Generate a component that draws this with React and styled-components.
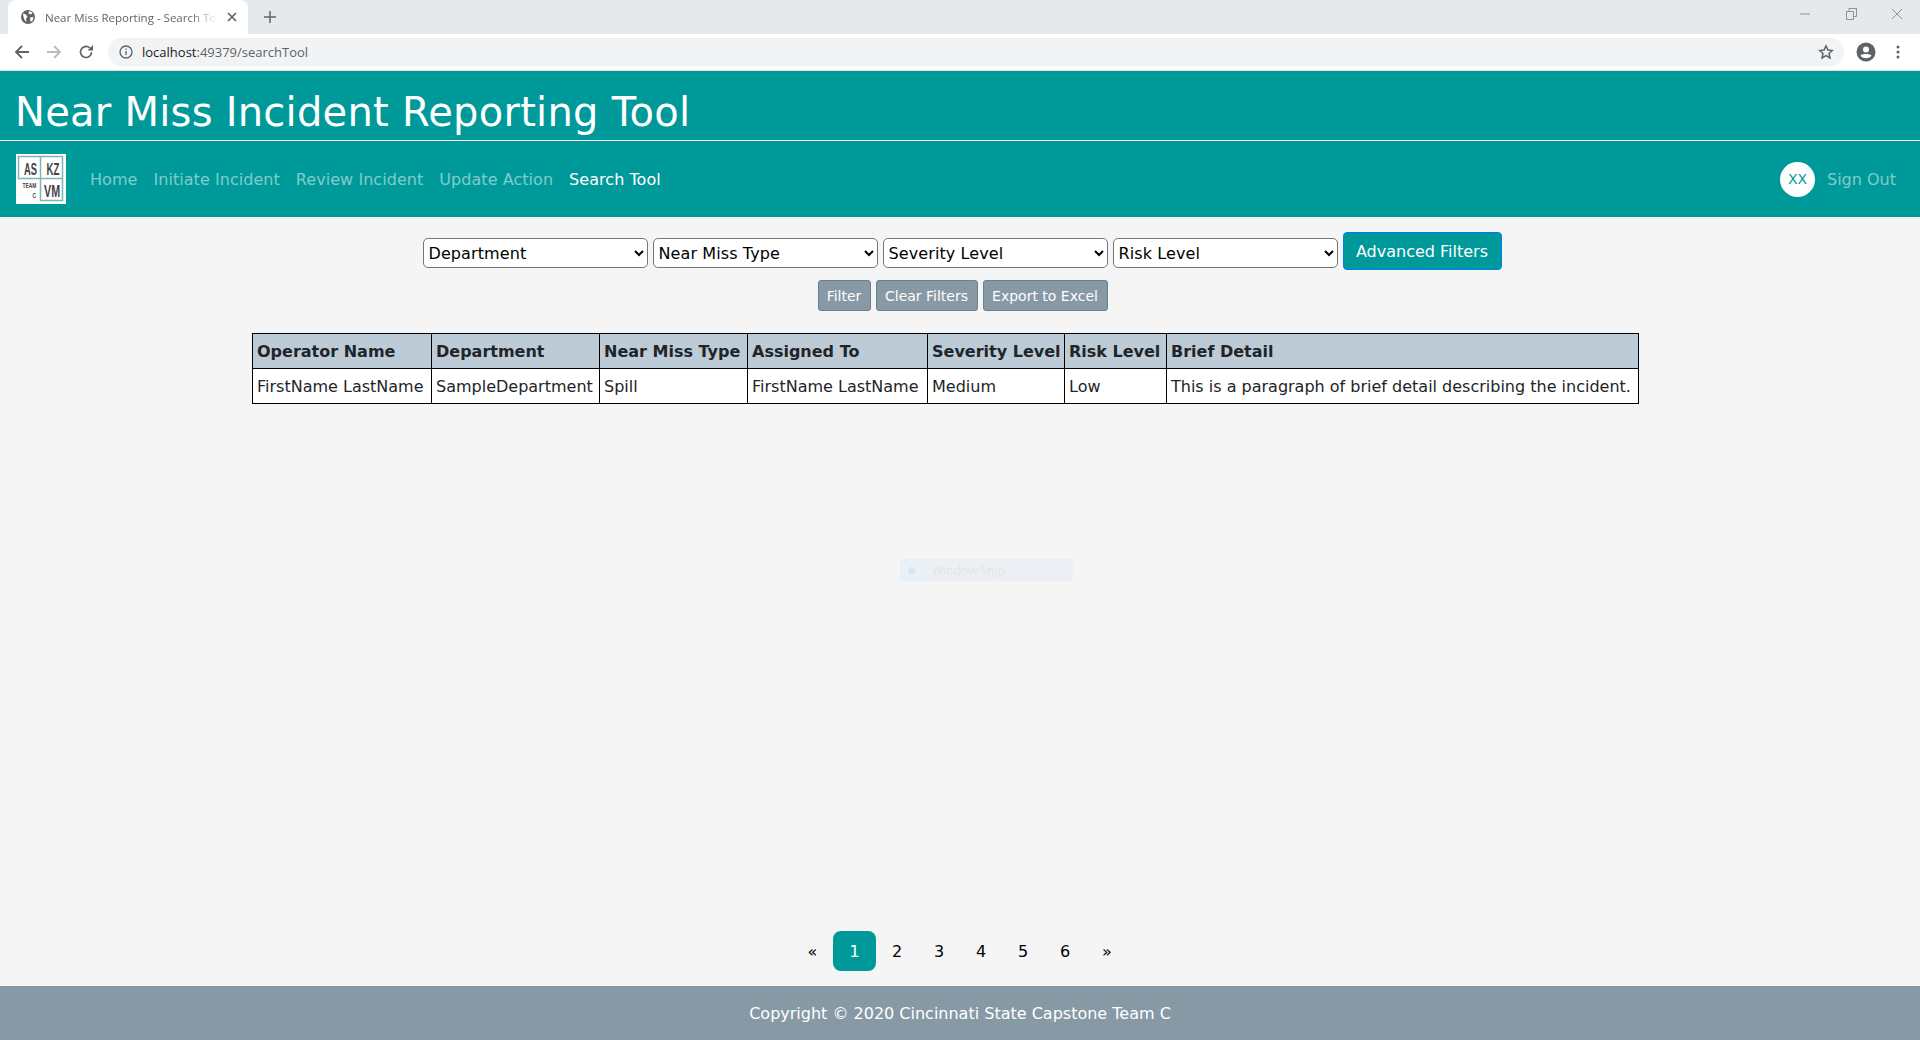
import styled, { createGlobalStyle } from "styled-components";

const GlobalStyle = createGlobalStyle`
  html, body { margin: 0; padding: 0; height: 100%; }
  body {
    background: #f5f5f5;
    font-family: "DejaVu Sans", Verdana, sans-serif;
    color: #212529;
    overflow: hidden;
  }
  #root { height: 100%; }
`;

const Page = styled.div`
  height: 1040px;
  display: flex;
  flex-direction: column;
`;

/* browser chrome */
const TabStrip = styled.div`
  height: 34px;
  background: #e6e9ec;
  display: flex;
  align-items: flex-end;
  padding-left: 8px;
  font-family: "Open Sans", "Liberation Sans", sans-serif;
`;

const Tab = styled.div`
  width: 240px;
  height: 34px;
  background: #fff;
  border-radius: 8px 8px 0 0;
  box-sizing: border-box;
  padding: 0 10px 0 12px;
  display: flex;
  align-items: center;
  gap: 9px;
  svg { flex: none; }
`;

const TabTitle = styled.span`
  flex: 1;
  font-size: 11.5px;
  color: #5f6368;
  white-space: nowrap;
  overflow: hidden;
  mask-image: linear-gradient(to right, #000 85%, transparent);
`;

const NewTab = styled.div`
  margin: 0 0 0 16px;
  height: 34px;
  display: flex;
  align-items: center;
`;

const WindowControls = styled.div`
  margin-left: auto;
  align-self: flex-start;
  display: flex;
  height: 28px;
  align-items: center;
  gap: 30px;
  padding-right: 15px;
`;

const Toolbar = styled.div`
  height: 37px;
  box-sizing: border-box;
  background: #fff;
  border-bottom: 1px solid #dfe1e5;
  display: flex;
  align-items: center;
  padding: 0 0 1px 14px;
`;

const NavIcons = styled.div`
  display: flex;
  align-items: center;
  gap: 16px;
  width: 94px;
`;

const AddressBar = styled.div`
  width: 1736px;
  height: 28px;
  border-radius: 14px;
  background: #f1f3f4;
  display: flex;
  align-items: center;
  padding: 0 10px 0 11px;
  box-sizing: border-box;
  font-family: "Open Sans", "Liberation Sans", sans-serif;
  font-size: 13px;
  color: #5f6368;
  gap: 9px;
  b { font-weight: 400; color: #202124; }
  svg:last-child { margin-left: auto; }
`;

const ToolbarEnd = styled.div`
  display: flex;
  align-items: center;
  gap: 20px;
  padding-left: 12px;
`;

/* site header */
const Banner = styled.header`
  background: #009999;
  height: 70px;
  box-sizing: border-box;
  border-bottom: 1px solid #fff;
  padding-left: 15px;
  display: flex;
  align-items: center;
`;

const Title = styled.h1`
  margin: 12px 0 0;
  font-size: 40px;
  font-weight: 400;
  letter-spacing: 0.25px;
  color: #fff;
  line-height: 48px;
`;

const NavBar = styled.nav`
  background: #009999;
  height: 76px;
  box-sizing: border-box;
  padding: 0 24px 0 16px;
  display: flex;
  align-items: center;
`;

const Logo = styled.svg`
  width: 50px;
  height: 50px;
  margin-right: 16px;
  flex: none;
`;

const NavLink = styled.a`
  font-size: 16px;
  letter-spacing: 0.05px;
  padding: 0 8px;
  color: ${({ $active }) => ($active ? "#fff" : "rgba(255,255,255,.5)")};
`;

const UserArea = styled.div`
  margin-left: auto;
  display: flex;
  align-items: center;
  gap: 12px;
`;

const Avatar = styled.div`
  width: 35px;
  height: 35px;
  border-radius: 50%;
  background: #fff;
  color: #009999;
  font-size: 14px;
  display: flex;
  align-items: center;
  justify-content: center;
`;

const SignOut = styled.a`
  font-size: 16px;
  color: rgba(255,255,255,.5);
`;

/* content */
const Main = styled.main`
  flex: 1;
  position: relative;
  display: flex;
  flex-direction: column;
  align-items: center;
`;

const FilterRow = styled.div`
  margin-top: 15px;
  padding-left: 4px;
  display: flex;
  align-items: center;
  gap: 5px;
`;

const Select = styled.select`
  width: 225px;
  height: 30px;
  margin-top: 4px;
  font-family: inherit;
  font-size: 16px;
  letter-spacing: 0.1px;
  color: #000;
  background-color: #fff;
  border: 1px solid #767676;
  border-radius: 5px;
  padding: 0 0 0 1px;
`;

const AdvancedButton = styled.button`
  width: 159px;
  height: 38px;
  background: #009999;
  border: 1px solid #007bff;
  border-radius: 4px;
  color: #fff;
  font-family: inherit;
  font-size: 16px;
  padding: 0;
`;

const ActionRow = styled.div`
  margin-top: 10px;
  padding-left: 5px;
  display: flex;
  gap: 5px;
`;

const ActionButton = styled.button`
  height: 31px;
  width: ${({ $w }) => $w}px;
  background: #8899a6;
  border: 1px solid #6c7f8d;
  border-radius: 3px;
  color: #fff;
  font-family: inherit;
  font-size: 14px;
  padding: 0;
`;

const Table = styled.table`
  margin: 22px 0 0 252px;
  align-self: flex-start;
  width: 1386px;
  table-layout: fixed;
  border-collapse: collapse;
  font-size: 16px;
  background: #fff;
  th, td {
    border: 1px solid #000;
    padding: 0 0 0 4px;
    height: 35px;
    text-align: left;
    white-space: nowrap;
    overflow: hidden;
    box-sizing: border-box;
  }
  th {
    background: #bccbd6;
    font-weight: 700;
    color: #212529;
  }
`;

const Pagination = styled.div`
  margin-top: auto;
  margin-bottom: 15px;
  display: flex;
  align-items: center;
`;

const PageLink = styled.a`
  width: ${({ $w }) => $w || 42}px;
  height: 40px;
  border-radius: 8px;
  display: flex;
  align-items: center;
  justify-content: center;
  font-size: 16px;
  color: ${({ $active }) => ($active ? "#fff" : "#000")};
  background: ${({ $active }) => ($active ? "#009999" : "transparent")};
`;

const SnipGhost = styled.div`
  position: absolute;
  left: 900px;
  top: 342px;
  width: 173px;
  height: 22px;
  display: flex;
  align-items: center;
  background: #ecf0f5;
  color: #e2e4e7;
  font-family: "Open Sans", "Liberation Sans", sans-serif;
  font-size: 12px;
`;

const SnipIcon = styled.div`
  width: 22px;
  height: 22px;
  margin-right: 10px;
  background: #e8f0f8;
  display: flex;
  align-items: center;
  justify-content: center;
  &::after {
    content: "";
    width: 7px;
    height: 7px;
    border-radius: 50%;
    background: #dfe3e8;
  }
`;

const Footer = styled.footer`
  height: 54px;
  background: #8899a6;
  color: #fff;
  font-size: 16px;
  display: flex;
  align-items: center;
  justify-content: center;
`;

const columns = [
  { label: "Operator Name", value: "FirstName LastName", width: 179 },
  { label: "Department", value: "SampleDepartment", width: 168 },
  { label: "Near Miss Type", value: "Spill", width: 148 },
  { label: "Assigned To", value: "FirstName LastName", width: 180 },
  { label: "Severity Level", value: "Medium", width: 137 },
  { label: "Risk Level", value: "Low", width: 102 },
  { label: "Brief Detail", value: "This is a paragraph of brief detail describing the incident.", width: 472 },
];

const navItems = ["Home", "Initiate Incident", "Review Incident", "Update Action"];
const filters = ["Department", "Near Miss Type", "Severity Level", "Risk Level"];

const App = () => {
  return (
    <Page>
      <GlobalStyle />
      <TabStrip>
        <Tab>
          <svg width="16" height="16" viewBox="0 0 16 16">
            <circle cx="8" cy="8" r="7" fill="#5f6368" />
            <path d="M3 4.500l3 1 1.500 2.500-1.500 1.500.5 3.500-2-2-1-3zM9 2l3.500 1.500-1.500 2-2.500-1zM10 8.500l3.500-.5-.5 3-2.500 2z" fill="#fff" />
          </svg>
          <TabTitle>Near Miss Reporting - Search Tool</TabTitle>
          <svg width="12" height="12" viewBox="0 0 12 12">
            <path d="M2 2l8 8M10 2l-8 8" stroke="#5f6368" strokeWidth="1.700" />
          </svg>
        </Tab>
        <NewTab>
          <svg width="12" height="12" viewBox="0 0 12 12">
            <path d="M6 0v12M0 6h12" stroke="#5f6368" strokeWidth="1.500" />
          </svg>
        </NewTab>
        <WindowControls>
          <svg width="16" height="10" viewBox="0 0 16 10"><path d="M3 5h10" stroke="#8f9296" /></svg>
          <svg width="16" height="12" viewBox="0 0 16 12"><path d="M3.500 3.500h7v8h-7zM6 3.500v-3h7.500v8h-3" fill="none" stroke="#8f9296" /></svg>
          <svg width="16" height="12" viewBox="0 0 16 12"><path d="M3 1l10 10M13 1L3 11" stroke="#8f9296" /></svg>
        </WindowControls>
      </TabStrip>

      <Toolbar>
        <NavIcons>
          <svg width="16" height="16" viewBox="0 0 16 16"><path d="M15 8H2M8 2L2 8l6 6" fill="none" stroke="#5f6368" strokeWidth="1.800" /></svg>
          <svg width="16" height="16" viewBox="0 0 16 16"><path d="M1 8h13M8 2l6 6-6 6" fill="none" stroke="#b9bbbe" strokeWidth="1.800" /></svg>
          <svg width="16" height="16" viewBox="0 0 16 16">
            <path d="M13.500 8A5.500 5.500 0 1 1 11.800 4" fill="none" stroke="#5f6368" strokeWidth="1.700" />
            <path d="M9.500 6.500h5.500V1z" fill="#5f6368" />
          </svg>
        </NavIcons>
        <AddressBar>
          <svg width="14" height="14" viewBox="0 0 14 14">
            <circle cx="7" cy="7" r="6" fill="none" stroke="#5f6368" strokeWidth="1.300" />
            <path d="M7 6v4M7 3.500v1.300" stroke="#5f6368" strokeWidth="1.300" />
          </svg>
          <span><b>localhost</b>:49379/searchTool</span>
          <svg width="16" height="16" viewBox="0 0 16 16">
            <path d="M8 1.800l1.900 4.200 4.500.5-3.400 3 1 4.500L8 11.700 4 14l1-4.500-3.400-3 4.500-.5z" fill="none" stroke="#5f6368" strokeWidth="1.500" />
          </svg>
        </AddressBar>
        <ToolbarEnd>
          <svg width="20" height="20" viewBox="0 0 20 20">
            <circle cx="10" cy="10" r="9.500" fill="#5f6368" />
            <circle cx="10" cy="7.500" r="3" fill="#fff" />
            <path d="M4.500 13.500c1.500-2 9.500-2 11 0-2 3.500-9 3.500-11 0z" fill="#fff" />
          </svg>
          <svg width="4" height="14" viewBox="0 0 4 14">
            <circle cx="2" cy="2" r="1.500" fill="#5f6368" />
            <circle cx="2" cy="7" r="1.500" fill="#5f6368" />
            <circle cx="2" cy="12" r="1.500" fill="#5f6368" />
          </svg>
        </ToolbarEnd>
      </Toolbar>

      <Banner>
        <Title>Near Miss Incident Reporting Tool</Title>
      </Banner>

      <NavBar>
        <Logo viewBox="0 0 50 50">
          <rect width="50" height="50" fill="#fff" />
          <path d="M2.500 2.500h22v22h-22zM24.500 2.500h22v22h-22zM24.500 24.500h22v22h-22z" fill="none" stroke="#7fb5b5" strokeWidth="1.500" />
          <g fontFamily="Liberation Sans" fontWeight="700" fill="#444">
            <text transform="translate(8 21) scale(.55 1)" fontSize="17">AS</text>
            <text transform="translate(30.500 21) scale(.57 1)" fontSize="17">KZ</text>
            <text transform="translate(28 43) scale(.63 1)" fontSize="17">VM</text>
            <text transform="translate(6.500 34) scale(.7 1)" fontSize="7">TEAM</text>
            <text transform="translate(16.500 44) scale(.6 1)" fontSize="8">C</text>
          </g>
        </Logo>
        {navItems.map((item) => (
          <NavLink key={item}>{item}</NavLink>
        ))}
        <NavLink $active>Search Tool</NavLink>
        <UserArea>
          <Avatar>XX</Avatar>
          <SignOut>Sign Out</SignOut>
        </UserArea>
      </NavBar>

      <Main>
        <FilterRow>
          {filters.map((filter) => (
            <Select key={filter} defaultValue={filter}>
              <option>{filter}</option>
            </Select>
          ))}
          <AdvancedButton>Advanced Filters</AdvancedButton>
        </FilterRow>
        <ActionRow>
          <ActionButton $w={53}>Filter</ActionButton>
          <ActionButton $w={102}>Clear Filters</ActionButton>
          <ActionButton $w={125}>Export to Excel</ActionButton>
        </ActionRow>
        <Table>
          <colgroup>
            {columns.map((col) => (
              <col key={col.label} style={{ width: col.width }} />
            ))}
          </colgroup>
          <thead>
            <tr>
              {columns.map((col) => (
                <th key={col.label}>{col.label}</th>
              ))}
            </tr>
          </thead>
          <tbody>
            <tr>
              {columns.map((col) => (
                <td key={col.label}>{col.value}</td>
              ))}
            </tr>
          </tbody>
        </Table>
        <SnipGhost>
          <SnipIcon />
          Window Snip
        </SnipGhost>
        <Pagination>
          <PageLink $w={41}>«</PageLink>
          <PageLink $active $w={43}>1</PageLink>
          <PageLink>2</PageLink>
          <PageLink>3</PageLink>
          <PageLink>4</PageLink>
          <PageLink>5</PageLink>
          <PageLink>6</PageLink>
          <PageLink $w={42}>»</PageLink>
        </Pagination>
      </Main>

      <Footer>Copyright © 2020 Cincinnati State Capstone Team C</Footer>
    </Page>
  );
};

export default App;
